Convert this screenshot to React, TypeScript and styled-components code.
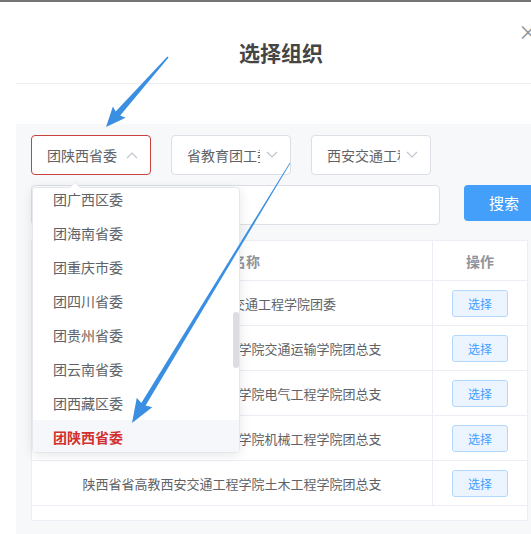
import styled, { createGlobalStyle } from 'styled-components';

const GlobalStyle = createGlobalStyle`
    html, body {
        margin: 0;
        padding: 0;
        background: #fff;
        overflow: hidden;
    }
    body {
        width: 531px;
        height: 534px;
        font-family: "Noto Sans CJK SC", "Noto Sans", sans-serif;
    }
`;

const provinces = [
    '团广西区委',
    '团海南省委',
    '团重庆市委',
    '团四川省委',
    '团贵州省委',
    '团云南省委',
    '团西藏区委',
    '团陕西省委',
];

const orgs = [
    '陕西省省高教西安交通工程学院团委',
    '陕西省省高教西安交通工程学院交通运输学院团总支',
    '陕西省省高教西安交通工程学院电气工程学院团总支',
    '陕西省省高教西安交通工程学院机械工程学院团总支',
    '陕西省省高教西安交通工程学院土木工程学院团总支',
];

const arrowPoints = (
    tx: number,
    ty: number,
    px: number,
    py: number,
    w0: number,
    w1: number,
    hl: number,
    hw: number
) => {
    const dx = px - tx;
    const dy = py - ty;
    const len = Math.hypot(dx, dy);
    const ux = dx / len;
    const uy = dy / len;
    const nx = -uy;
    const ny = ux;
    const bx = px - ux * hl;
    const by = py - uy * hl;
    const pts = [
        [tx + (nx * w0) / 2, ty + (ny * w0) / 2],
        [bx + (nx * w1) / 2, by + (ny * w1) / 2],
        [bx + nx * hw - ux * 2, by + ny * hw - uy * 2],
        [px, py],
        [bx - nx * hw - ux * 2, by - ny * hw - uy * 2],
        [bx - (nx * w1) / 2, by - (ny * w1) / 2],
        [tx - (nx * w0) / 2, ty - (ny * w0) / 2],
    ];
    return pts.map((p) => `${p[0].toFixed(1)},${p[1].toFixed(1)}`).join(' ');
};

const Chevron = ({ up }: { up?: boolean }) => (
    <svg width="12" height="8" viewBox="0 0 12 8">
        <polyline
            points={up ? '1,7 6,2 11,7' : '1,1 6,6 11,1'}
            fill="none"
            stroke="#c0c4cc"
            strokeWidth="1.1"
        />
    </svg>
);

const App = () => {
    return (
        <Page>
            <GlobalStyle />
            <TopBar />
            <Dialog>
                <Header>
                    <Title>选择组织</Title>
                    <Close>×</Close>
                </Header>
                <Body>
                    <Panel>
                        <SelectRow>
                            <Select $active>
                                <SelectText>团陕西省委</SelectText>
                                <Chevron up />
                            </Select>
                            <Select>
                                <SelectText>省教育团工委</SelectText>
                                <Chevron />
                            </Select>
                            <Select>
                                <SelectText>西安交通工程学院</SelectText>
                                <Chevron />
                            </Select>
                            <Dropdown>
                                <OptionList>
                                    {provinces.map((p, i) => (
                                        <Option
                                            key={p}
                                            $selected={i === provinces.length - 1}
                                        >
                                            {p}
                                        </Option>
                                    ))}
                                </OptionList>
                                <Thumb />
                            </Dropdown>
                        </SelectRow>
                        <SearchRow>
                            <SearchInput />
                            <SearchButton>搜索</SearchButton>
                        </SearchRow>
                        <TableCard>
                            <HeadRow>
                                <NameCell $head>组织名称</NameCell>
                                <ActionCell $head>操作</ActionCell>
                            </HeadRow>
                            {orgs.map((o) => (
                                <Row key={o}>
                                    <NameCell>{o}</NameCell>
                                    <ActionCell>
                                        <PickButton>选择</PickButton>
                                    </ActionCell>
                                </Row>
                            ))}
                        </TableCard>
                    </Panel>
                </Body>
            </Dialog>
            <Arrows width="531" height="534" viewBox="0 0 531 534">
                <polygon
                    points={arrowPoints(168, 57, 106, 127, 1.5, 6, 18, 8.5)}
                    fill="#3a8fe3"
                />
                <polygon
                    points={arrowPoints(290, 163, 132, 423, 0.8, 5, 22, 9)}
                    fill="#3a8fe3"
                />
            </Arrows>
        </Page>
    );
};

const Page = styled.div`
    position: relative;
    width: 531px;
    height: 534px;
    overflow: hidden;
    background: #fff;
`;

const TopBar = styled.div`
    height: 2px;
    background: #757575;
`;

const Dialog = styled.div`
    margin-left: 16px;
    width: 530px;
    background: #fff;
`;

const Header = styled.div`
    position: relative;
    padding: 35px 0 16px;
    border-bottom: 1px solid #eeeeee;
    text-align: center;
`;

const Title = styled.div`
    font-size: 21px;
    line-height: 30px;
    font-weight: bold;
    color: #454545;
`;

const Close = styled.span`
    position: absolute;
    top: 20px;
    right: 8px;
    font-size: 20px;
    line-height: 20px;
    color: #909399;
`;

const Body = styled.div`
    padding-top: 40px;
`;

const Panel = styled.div`
    background: #f7f8fa;
    padding: 11px 18px 20px 15px;
    height: 400px;
`;

const SelectRow = styled.div`
    position: relative;
    display: flex;
    gap: 20px;
`;

const Select = styled.div<{ $active?: boolean }>`
    box-sizing: border-box;
    width: 120px;
    height: 40px;
    padding: 0 12px 0 15px;
    display: flex;
    align-items: center;
    justify-content: space-between;
    background: #fff;
    border: 1px solid ${(p) => (p.$active ? '#c8413f' : '#dcdfe6')};
    border-radius: 4px;
`;

const SelectText = styled.span`
    width: 73px;
    overflow: hidden;
    white-space: nowrap;
    font-size: 14px;
    color: #606266;
`;

const Dropdown = styled.div`
    position: absolute;
    top: 52px;
    left: 1px;
    z-index: 5;
    box-sizing: border-box;
    width: 208px;
    height: 266px;
    background: #fff;
    border: 1px solid #e4e7ed;
    border-radius: 4px;
    box-shadow: 0 2px 12px rgba(0, 0, 0, 0.1);

    &::before {
        content: '';
        position: absolute;
        top: -6px;
        left: 36px;
        border: 6px solid transparent;
        border-top: 0;
        border-bottom-color: #e4e7ed;
    }
    &::after {
        content: '';
        position: absolute;
        top: -5px;
        left: 37px;
        border: 5px solid transparent;
        border-top: 0;
        border-bottom-color: #fff;
    }
`;

const OptionList = styled.div`
    height: 100%;
    overflow: hidden;

    & > :first-child {
        margin-top: -6px;
    }
`;

const Option = styled.div<{ $selected?: boolean }>`
    height: 34px;
    line-height: 34px;
    padding-left: 20px;
    font-size: 14px;
    color: ${(p) => (p.$selected ? '#d2302e' : '#606266')};
    font-weight: ${(p) => (p.$selected ? 'bold' : 'normal')};
    background: ${(p) => (p.$selected ? '#f5f7fa' : 'transparent')};
`;

const Thumb = styled.div`
    position: absolute;
    top: 124px;
    left: 200px;
    width: 6px;
    height: 56px;
    border-radius: 3px;
    background: #dcdde0;
`;

const SearchRow = styled.div`
    display: flex;
    align-items: flex-start;
    gap: 24px;
    margin-top: 10px;
`;

const SearchInput = styled.div`
    box-sizing: border-box;
    width: 409px;
    height: 40px;
    flex-shrink: 0;
    background: #fff;
    border: 1px solid #dcdfe6;
    border-radius: 4px;
`;

const SearchButton = styled.div`
    width: 80px;
    height: 36px;
    flex-shrink: 0;
    line-height: 36px;
    text-align: center;
    font-size: 15px;
    color: #fff;
    background: #439ffa;
    border-radius: 4px;
`;

const TableCard = styled.div`
    margin-top: 15px;
    padding-bottom: 14px;
    background: #fff;
    border: 1px solid #ebeef5;
`;

const HeadRow = styled.div`
    display: flex;
    height: 39px;
    border-bottom: 1px solid #ebeef5;
`;

const Row = styled.div`
    display: flex;
    height: 44px;
    border-bottom: 1px solid #ebeef5;
`;

const NameCell = styled.div<{ $head?: boolean }>`
    width: 400px;
    display: flex;
    align-items: center;
    justify-content: center;
    border-right: 1px solid #ebeef5;
    font-size: ${(p) => (p.$head ? '14px' : '13px')};
    font-weight: ${(p) => (p.$head ? 'bold' : 'normal')};
    color: ${(p) => (p.$head ? '#909399' : '#606266')};
    white-space: nowrap;
`;

const ActionCell = styled.div<{ $head?: boolean }>`
    flex: 1;
    display: flex;
    align-items: center;
    justify-content: center;
    font-size: 14px;
    font-weight: ${(p) => (p.$head ? 'bold' : 'normal')};
    color: #909399;
`;

const PickButton = styled.div`
    box-sizing: border-box;
    width: 56px;
    height: 27px;
    line-height: 25px;
    text-align: center;
    font-size: 12px;
    color: #409eff;
    background: #ecf5ff;
    border: 1px solid #b3d8ff;
    border-radius: 3px;
`;

const Arrows = styled.svg`
    position: absolute;
    top: 0;
    left: 0;
    z-index: 10;
    pointer-events: none;
`;

export default App;
